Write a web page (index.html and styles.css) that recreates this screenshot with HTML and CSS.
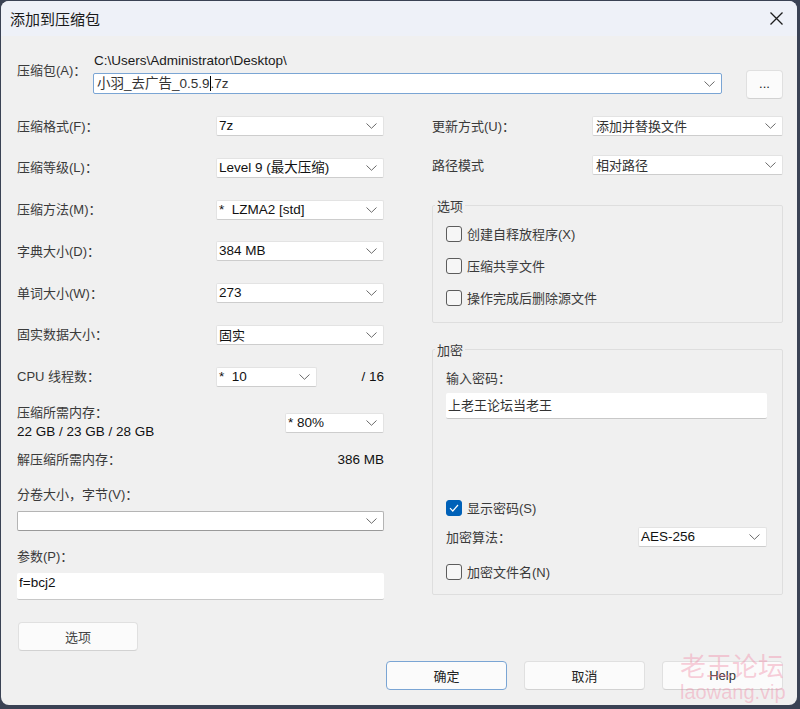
FILE: index.html
```html
<!DOCTYPE html>
<html lang="zh-CN">
<head>
<meta charset="utf-8">
<title>添加到压缩包</title>
<link rel="stylesheet" href="styles.css">
</head>
<body>
<div class="dialog">
  <div class="titlebar">
    <span class="title">添加到压缩包</span>
    <span class="close"><svg width="13" height="13" viewBox="0 0 13 13"><path d="M0.5 0.5L12.5 12.5M12.5 0.5L0.5 12.5" stroke="#1c1c1c" stroke-width="1.3" fill="none"/></svg></span>
  </div>

  <div class="archive">
    <div class="archive-label">压缩包(A)：</div>
    <div class="archive-field">
      <div class="path">C:\Users\Administrator\Desktop\</div>
      <div class="combo combo-focus"><span class="val">小羽_去广告_0.5.9<span class="cursor"></span>.7z</span><svg class="chev" width="11" height="6" viewBox="0 0 11 6"><path d="M0.5 0.5L5.5 5.3L10.5 0.5" fill="none" stroke="#6a6a6a" stroke-width="1"/></svg></div>
    </div>
    <div class="btn btn-browse">...</div>
  </div>

  <div class="main">
    <div class="col-left">
      <div class="fields">
        <div class="row"><span class="lbl">压缩格式(F)：</span><div class="combo"><span class="val">7z</span><svg class="chev" width="11" height="6" viewBox="0 0 11 6"><path d="M0.5 0.5L5.5 5.3L10.5 0.5" fill="none" stroke="#6a6a6a" stroke-width="1"/></svg></div></div>
        <div class="row"><span class="lbl">压缩等级(L)：</span><div class="combo"><span class="val">Level 9 (最大压缩)</span><svg class="chev" width="11" height="6" viewBox="0 0 11 6"><path d="M0.5 0.5L5.5 5.3L10.5 0.5" fill="none" stroke="#6a6a6a" stroke-width="1"/></svg></div></div>
        <div class="row"><span class="lbl">压缩方法(M)：</span><div class="combo"><span class="val">*&nbsp;&nbsp;LZMA2 [std]</span><svg class="chev" width="11" height="6" viewBox="0 0 11 6"><path d="M0.5 0.5L5.5 5.3L10.5 0.5" fill="none" stroke="#6a6a6a" stroke-width="1"/></svg></div></div>
        <div class="row"><span class="lbl">字典大小(D)：</span><div class="combo"><span class="val">384 MB</span><svg class="chev" width="11" height="6" viewBox="0 0 11 6"><path d="M0.5 0.5L5.5 5.3L10.5 0.5" fill="none" stroke="#6a6a6a" stroke-width="1"/></svg></div></div>
        <div class="row"><span class="lbl">单词大小(W)：</span><div class="combo"><span class="val">273</span><svg class="chev" width="11" height="6" viewBox="0 0 11 6"><path d="M0.5 0.5L5.5 5.3L10.5 0.5" fill="none" stroke="#6a6a6a" stroke-width="1"/></svg></div></div>
        <div class="row"><span class="lbl">固实数据大小：</span><div class="combo"><span class="val cjk">固实</span><svg class="chev" width="11" height="6" viewBox="0 0 11 6"><path d="M0.5 0.5L5.5 5.3L10.5 0.5" fill="none" stroke="#6a6a6a" stroke-width="1"/></svg></div></div>
        <div class="row row-cpu"><span class="lbl">CPU 线程数：</span><div class="combo"><span class="val">*&nbsp;&nbsp;10</span><svg class="chev" width="11" height="6" viewBox="0 0 11 6"><path d="M0.5 0.5L5.5 5.3L10.5 0.5" fill="none" stroke="#6a6a6a" stroke-width="1"/></svg></div><span class="num">/ 16</span></div>
      </div>

      <div class="mem-row">
        <div class="mem-text">
          <div class="lbl">压缩所需内存：</div>
          <div class="num-left">22 GB / 23 GB / 28 GB</div>
        </div>
        <div class="combo combo-mem"><span class="val">* 80%</span><svg class="chev" width="11" height="6" viewBox="0 0 11 6"><path d="M0.5 0.5L5.5 5.3L10.5 0.5" fill="none" stroke="#6a6a6a" stroke-width="1"/></svg></div>
      </div>

      <div class="decomp-row"><span class="lbl">解压缩所需内存：</span><span class="num">386 MB</span></div>

      <div class="lbl block-lbl">分卷大小，字节(V)：</div>
      <div class="combo combo-wide combo-edit"><span class="val"></span><svg class="chev" width="11" height="6" viewBox="0 0 11 6"><path d="M0.5 0.5L5.5 5.3L10.5 0.5" fill="none" stroke="#6a6a6a" stroke-width="1"/></svg></div>

      <div class="lbl block-lbl">参数(P)：</div>
      <div class="textbox textbox-param">f=bcj2</div>

      <div class="btn btn-options">选项</div>
    </div>

    <div class="col-right">
      <div class="rrow"><span class="lbl">更新方式(U)：</span><div class="combo"><span class="val cjk">添加并替换文件</span><svg class="chev" width="11" height="6" viewBox="0 0 11 6"><path d="M0.5 0.5L5.5 5.3L10.5 0.5" fill="none" stroke="#6a6a6a" stroke-width="1"/></svg></div></div>
      <div class="rrow rrow-2"><span class="lbl">路径模式</span><div class="combo"><span class="val cjk">相对路径</span><svg class="chev" width="11" height="6" viewBox="0 0 11 6"><path d="M0.5 0.5L5.5 5.3L10.5 0.5" fill="none" stroke="#6a6a6a" stroke-width="1"/></svg></div></div>

      <fieldset class="group group-options">
        <legend>选项</legend>
        <div class="chk-list">
          <label class="chk"><span class="box"></span><span class="lbl">创建自释放程序(X)</span></label>
          <label class="chk"><span class="box"></span><span class="lbl">压缩共享文件</span></label>
          <label class="chk"><span class="box"></span><span class="lbl">操作完成后删除源文件</span></label>
        </div>
      </fieldset>

      <fieldset class="group group-enc">
        <legend>加密</legend>
        <div class="lbl pwd-lbl">输入密码：</div>
        <div class="textbox textbox-pwd cjk">上老王论坛当老王</div>
        <label class="chk chk-show"><span class="box box-on"><svg width="10" height="8" viewBox="0 0 10 8"><path d="M1 4.2L3.8 7L9 1" fill="none" stroke="#fff" stroke-width="1.2"/></svg></span><span class="lbl">显示密码(S)</span></label>
        <div class="algo-row"><span class="lbl">加密算法：</span><div class="combo"><span class="val">AES-256</span><svg class="chev" width="11" height="6" viewBox="0 0 11 6"><path d="M0.5 0.5L5.5 5.3L10.5 0.5" fill="none" stroke="#6a6a6a" stroke-width="1"/></svg></div></div>
        <label class="chk chk-names"><span class="box"></span><span class="lbl">加密文件名(N)</span></label>
      </fieldset>
    </div>
  </div>

  <div class="footer">
    <div class="btn btn-ok">确定</div>
    <div class="btn">取消</div>
    <div class="btn btn-help">Help</div>
  </div>

  <div class="watermark">
    <div class="wm-cn">老王论坛</div>
    <div class="wm-en">laowang.vip</div>
  </div>
</div>
</body>
</html>
```

FILE: styles.css
```css
* { box-sizing: border-box; }

body {
  margin: 0;
  background: #3a4254;
  font-family: "Liberation Sans", "Noto Sans CJK SC", sans-serif;
  font-size: 13px;
  color: #1a1a1a;
}

.dialog {
  margin: 1px 0 0 1px;
  width: 796px;
  height: 704px;
  background: #f0f0f0;
  border-radius: 8px;
  overflow: hidden;
  position: relative;
  display: flex;
  flex-direction: column;
}

.titlebar {
  height: 35px;
  flex: none;
  background: #eef1f8;
  display: flex;
  align-items: center;
  justify-content: space-between;
  padding: 0 14px 0 9px;
}

.title {
  font-family: "Noto Sans CJK SC", sans-serif;
  font-size: 15px;
  color: #1a1a1a;
}

.close { display: flex; }

.lbl {
  font-family: "Liberation Sans", "Noto Sans CJK SC", sans-serif;
  color: #3a3a3a;
  line-height: 19px;
  white-space: nowrap;
}

.cjk { font-family: "Noto Sans CJK SC", sans-serif; }

/* archive row */
.archive {
  display: flex;
  padding: 17px 14px 0 16px;
  flex: none;
}

.archive-label {
  width: 76px;
  padding-top: 8px;
  line-height: 19px;
  color: #3a3a3a;
  white-space: nowrap;
}

.archive-field { width: 629px; }

.path {
  height: 16px;
  line-height: 16px;
  margin-left: 1px;
  font-size: 13.5px;
  color: #1a1a1a;
}

.btn-browse {
  margin-left: 24px;
  margin-top: 17px;
  width: 37px;
  height: 29px;
}

/* combo */
.combo {
  height: 20px;
  background: #ffffff;
  border: 1px solid #e3e3e3;
  border-bottom-color: #cdcdcd;
  border-radius: 2px;
  display: flex;
  align-items: center;
  justify-content: space-between;
  padding: 0 6px 0 2px;
}

.combo .val {
  color: #111;
  white-space: pre;
  line-height: 18px;
  font-size: 13.5px;
}

.combo .val.cjk { font-size: 13px; }

.chev { flex: none; }

.combo-focus {
  margin-top: 4px;
  height: 21px;
  border: 1px solid #7aa5d4;
  padding-left: 3px;
}

.combo-focus .val {
  font-family: "Liberation Sans", "Noto Sans CJK SC", sans-serif;
  color: #333;
  display: flex;
  align-items: center;
}

.cursor {
  display: inline-block;
  width: 1px;
  height: 15px;
  background: #000;
}

/* main */
.main {
  display: grid;
  grid-template-columns: 367px 351px;
  column-gap: 48px;
  padding: 0 14px 0 16px;
  margin-top: 17px;
  flex: none;
}

.fields {
  display: flex;
  flex-direction: column;
  gap: 21.8px;
}

.row {
  display: grid;
  grid-template-columns: 199px 168px;
  align-items: center;
  height: 20px;
}

.row-cpu { grid-template-columns: 199px 101px 1fr; }

.num {
  text-align: right;
  color: #111;
  white-space: nowrap;
  line-height: 19px;
  font-size: 13.5px;
}

.mem-row {
  margin-top: 16px;
  display: flex;
  justify-content: space-between;
  align-items: flex-start;
}

.num-left { line-height: 19px; color: #111; font-size: 13.5px; }

.combo-mem {
  width: 99px;
  margin-top: 10px;
}

.decomp-row {
  margin-top: 9.5px;
  display: flex;
  justify-content: space-between;
}

.block-lbl { margin-top: 16px; }

.combo-wide {
  margin-top: 7px;
  width: 367px;
}

.combo-edit { border-color: #b4b4b4; border-bottom-color: #9a9a9a; }

.textbox {
  background: #fff;
  border-bottom: 1px solid #c8c8c8;
  border-radius: 2px;
  color: #111;
}

.textbox-param {
  margin-top: 6.5px;
  height: 27px;
  padding: 1px 2px;
  line-height: 18px;
  font-size: 13.5px;
}

.btn {
  background: #fbfbfb;
  border: 1px solid #e0e0e0;
  border-bottom-color: #d2d2d2;
  border-radius: 4px;
  display: flex;
  align-items: center;
  justify-content: center;
  color: #222;
  font-family: "Noto Sans CJK SC", sans-serif;
}

.btn-browse { font-family: "Liberation Sans", sans-serif; padding-bottom: 2px; }

.btn-options {
  margin-top: 22px;
  margin-left: 1px;
  width: 120px;
  height: 29px;
  color: #444;
}

/* right column */
.rrow {
  display: grid;
  grid-template-columns: 160px 191px;
  align-items: center;
  height: 20px;
}

.rrow-2 { margin-top: 19px; }

.rrow .val { padding-left: 1px; color: #333; }

.group {
  margin: 0;
  border: 1px solid #dedede;
  border-radius: 2px;
  min-width: 0;
}

.group legend {
  padding: 0 2px;
  margin-left: -11px;
  line-height: 19px;
  color: #3a3a3a;
  font-family: "Noto Sans CJK SC", sans-serif;
}

.group-options {
  margin-top: 20.5px;
  padding: 9.5px 15px 14px 13px;
}

.chk-list {
  display: flex;
  flex-direction: column;
  gap: 12px;
}

.chk {
  display: flex;
  align-items: center;
  gap: 5px;
  height: 20px;
}

.box {
  width: 16px;
  height: 16px;
  flex: none;
  border: 1px solid #5c5c5c;
  border-radius: 3px;
  background: #f6f6f6;
  display: flex;
  align-items: center;
  justify-content: center;
}

.box-on {
  background: #0061b8;
  border-color: #0061b8;
}

.group-enc {
  margin-top: 16.5px;
  padding: 10px 15px 12px 13px;
}

.textbox-pwd {
  margin-top: 5.5px;
  height: 26px;
  padding: 2px 2px;
  line-height: 19px;
  color: #333;
}

.chk-show { margin-top: 79px; }

.algo-row {
  margin-top: 9px;
  display: grid;
  grid-template-columns: 192px 129px;
  align-items: center;
  height: 20px;
}

.chk-names { margin-top: 15px; }

/* footer */
.footer {
  display: flex;
  justify-content: flex-end;
  gap: 17px;
  padding-right: 14px;
  margin-top: 10px;
  flex: none;
}

.footer .btn {
  width: 121px;
  height: 29px;
}

.btn-ok { border-color: #7aa5d4; }

.btn-help { font-family: "Liberation Sans", sans-serif; color: #333; }

/* watermark overlay */
.watermark {
  position: absolute;
  left: 679px;
  top: 648px;
  pointer-events: none;
  color: rgba(240, 130, 160, 0.38);
}

.wm-cn {
  font-family: "Noto Sans CJK SC", sans-serif;
  font-size: 26px;
  line-height: 32px;
}

.wm-en {
  font-family: "Liberation Sans", sans-serif;
  font-size: 20px;
  line-height: 22px;
}
```
